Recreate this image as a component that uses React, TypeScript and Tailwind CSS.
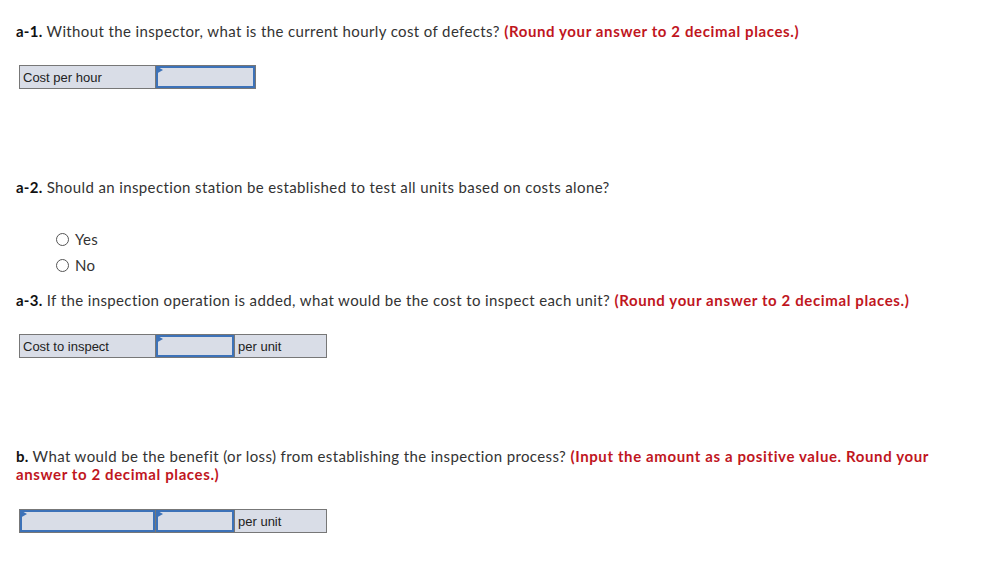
import React from "react";

const Marker = () => (
  <svg className="absolute left-0 top-0" width="7" height="9" viewBox="0 0 7 9">
    <path d="M0 0 L7 4 L0 8 Z" fill="#3d72b8" />
  </svg>
);

const InputCell = ({ w }: { w: string }) => (
  <div className={`relative h-full ${w} border-l border-[#777] bg-[#d9dde7]`}>
    <div className="h-full w-full border-2 border-[#3d72b8]" />
    <Marker />
  </div>
);

const LabelCell = ({ w, text, first }: { w: string; text: string; first?: boolean }) => (
  <div
    className={`h-full ${w} ${first ? "" : "border-l border-[#777]"} bg-[#d9dde7] px-[3px] pt-[3px] text-[13px] leading-[17px] text-[#222]`}
    style={{ fontFamily: "'Liberation Sans', Arial, sans-serif" }}
  >
    {text}
  </div>
);

const Question = ({ tag, text, note }: { tag: string; text: string; note: string }) => (
  <p className="text-[15px] leading-[18px] tracking-[0.38px] text-[#333]">
    <span className="font-bold tracking-[0.25px] text-[#111]">{tag}</span> {text}{" "}
    {note && <span className="font-bold tracking-[0.62px] text-[#c0161e]">{note}</span>}
  </p>
);

const Radio = ({ label }: { label: string }) => (
  <label className="flex h-[26px] items-center gap-[6px] text-[15px] tracking-[0.3px] text-[#333]">
    <span className="h-[13px] w-[13px] rounded-full border border-[#555] bg-white" />
    {label}
  </label>
);

export default function App() {
  return (
    <div
      className="min-h-screen w-[991px] bg-white pl-[16px] pt-[22px]"
      style={{ fontFamily: "Lato, 'Open Sans', sans-serif" }}
    >
      <Question
        tag="a-1."
        text="Without the inspector, what is the current hourly cost of defects?"
        note="(Round your answer to 2 decimal places.)"
      />
      <div className="ml-[3px] mt-[25px] flex h-[24px] w-[237px] border border-[#777]">
        <LabelCell w="w-[135px]" text="Cost per hour" first />
        <InputCell w="w-[100px]" />
      </div>

      <div className="mt-[89px]">
        <Question tag="a-2." text="Should an inspection station be established to test all units based on costs alone?" note="" />
      </div>
      <div className="ml-[40px] mt-[30px] flex flex-col">
        <Radio label="Yes" />
        <Radio label="No" />
      </div>

      <div className="mt-[13px]">
        <Question
          tag="a-3."
          text="If the inspection operation is added, what would be the cost to inspect each unit?"
          note="(Round your answer to 2 decimal places.)"
        />
      </div>
      <div className="ml-[3px] mt-[25px] flex h-[24px] w-[308px] border border-[#777]">
        <LabelCell w="w-[135px]" text="Cost to inspect" first />
        <InputCell w="w-[79px]" />
        <LabelCell w="w-[92px]" text="per unit" />
      </div>

      <div className="mt-[89px] w-[930px]">
        <Question
          tag="b."
          text="What would be the benefit (or loss) from establishing the inspection process?"
          note="(Input the amount as a positive value. Round your answer to 2 decimal places.)"
        />
      </div>
      <div className="ml-[3px] mt-[26px] flex h-[24px] w-[308px] border border-[#777]">
        <div className="relative h-full w-[135px] bg-[#d9dde7]">
          <div className="h-full w-full border-2 border-[#3d72b8]" />
          <Marker />
        </div>
        <InputCell w="w-[79px]" />
        <LabelCell w="w-[92px]" text="per unit" />
      </div>
    </div>
  );
}
